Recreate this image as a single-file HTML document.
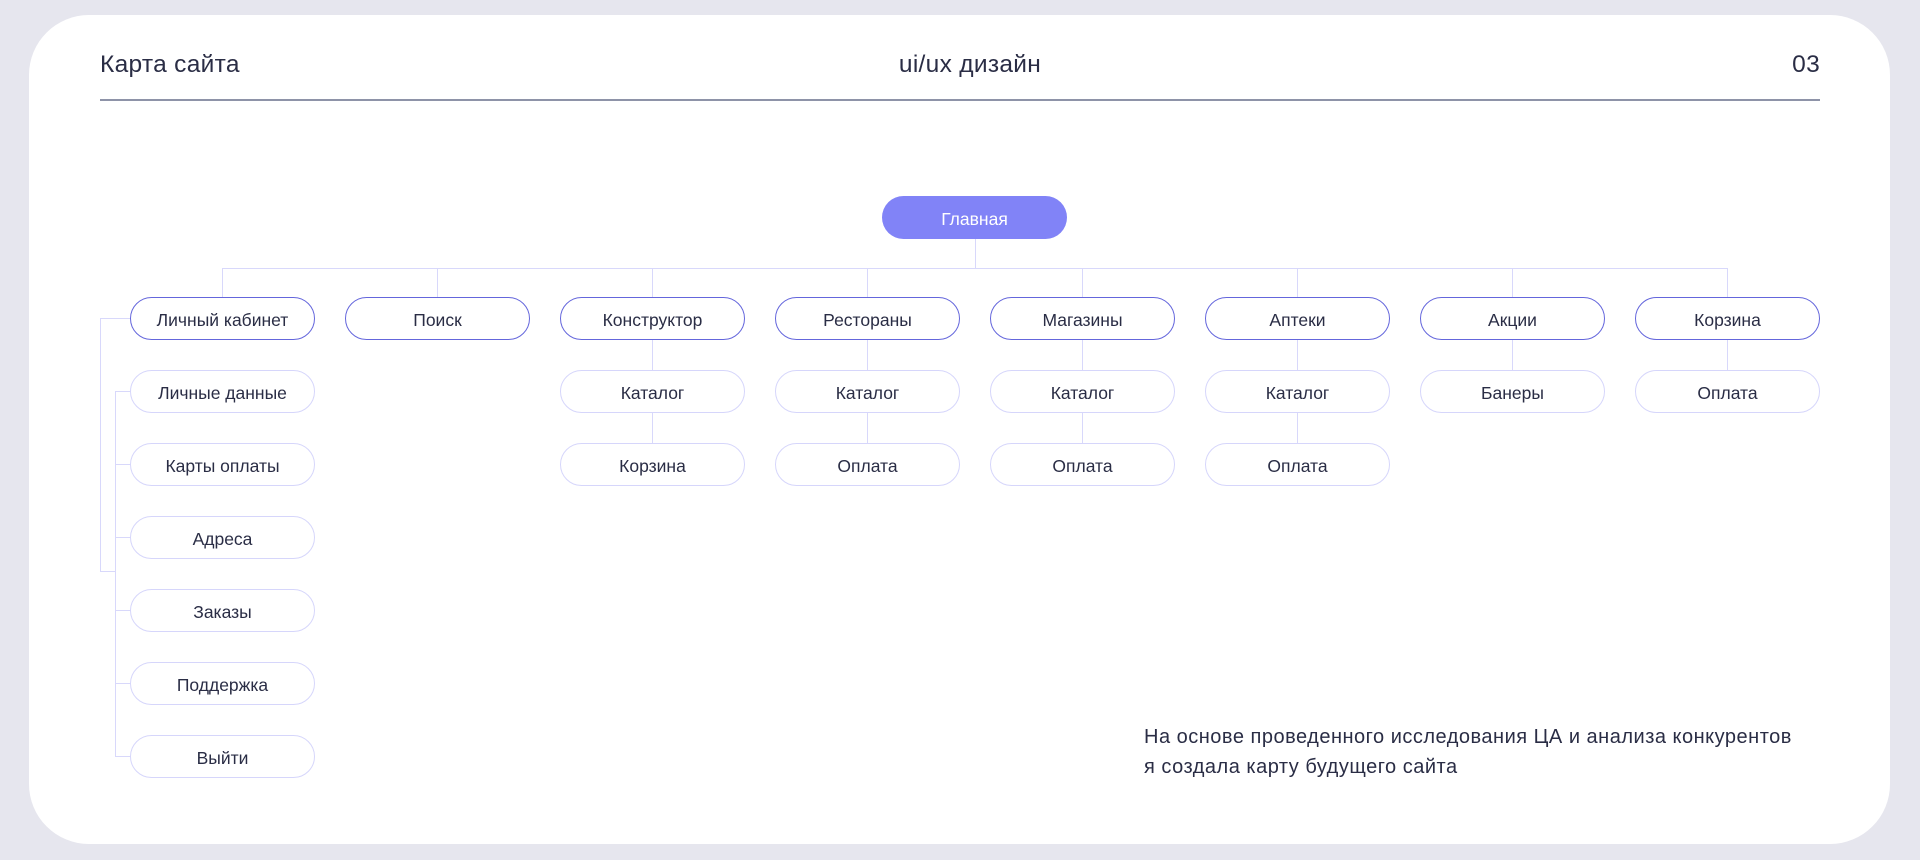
<!DOCTYPE html>
<html><head><meta charset="utf-8"><style>
*{margin:0;padding:0;box-sizing:border-box}
body{width:1920px;height:860px;background:#e6e6ee;font-family:"Liberation Sans","Noto Sans CJK SC",sans-serif;color:#2a2d45;position:relative;overflow:hidden}
.card{position:absolute;left:29px;top:15px;width:1861px;height:829px;background:#fff;border-radius:60px}
.h{position:absolute;top:51px;font-size:24.5px;color:#2a2d45;letter-spacing:0.3px}
.div{position:absolute;left:100px;top:99px;width:1720px;height:1.5px;background:#8e93a8}
.b{position:absolute;width:185px;height:43px;border-radius:22px;border:1.3px solid #d6d6fb;background:#fff;display:flex;align-items:center;justify-content:center;font-size:17.5px;color:#2a2d45;padding-top:3px}
.t{border-color:#6466dc}
.l{position:absolute;background:#d8d8fb}
.main{background:#8183f7;border:none;color:#fff}
.txt{position:absolute;left:1144px;top:722px;font-size:20px;letter-spacing:0.5px;line-height:30px;color:#2a2d45}
</style></head><body>
<div class="card"></div>
<div class="h" style="left:100px">Карта сайта</div>
<div class="h" style="left:0;width:1940px;text-align:center">ui/ux дизайн</div>
<div class="h" style="right:100px">03</div>
<div class="div"></div>

<div class="l" style="left:975px;top:239px;width:1.3px;height:29px"></div>
<div class="l" style="left:222px;top:268px;width:1505px;height:1.3px"></div>
<div class="l" style="left:222px;top:268px;width:1.3px;height:29px"></div>
<div class="l" style="left:437px;top:268px;width:1.3px;height:29px"></div>
<div class="l" style="left:652px;top:268px;width:1.3px;height:29px"></div>
<div class="l" style="left:867px;top:268px;width:1.3px;height:29px"></div>
<div class="l" style="left:1082px;top:268px;width:1.3px;height:29px"></div>
<div class="l" style="left:1297px;top:268px;width:1.3px;height:29px"></div>
<div class="l" style="left:1512px;top:268px;width:1.3px;height:29px"></div>
<div class="l" style="left:1727px;top:268px;width:1.3px;height:29px"></div>
<div class="l" style="left:652px;top:340px;width:1.3px;height:103px"></div>
<div class="l" style="left:867px;top:340px;width:1.3px;height:103px"></div>
<div class="l" style="left:1082px;top:340px;width:1.3px;height:103px"></div>
<div class="l" style="left:1297px;top:340px;width:1.3px;height:103px"></div>
<div class="l" style="left:1512px;top:340px;width:1.3px;height:30px"></div>
<div class="l" style="left:1727px;top:340px;width:1.3px;height:30px"></div>
<div class="l" style="left:100px;top:318px;width:1.3px;height:253px"></div>
<div class="l" style="left:100px;top:318px;width:30px;height:1.3px"></div>
<div class="l" style="left:100px;top:571px;width:15px;height:1.3px"></div>
<div class="l" style="left:115px;top:391px;width:1.3px;height:365px"></div>
<div class="l" style="left:115px;top:391px;width:15px;height:1.3px"></div>
<div class="l" style="left:115px;top:464px;width:15px;height:1.3px"></div>
<div class="l" style="left:115px;top:537px;width:15px;height:1.3px"></div>
<div class="l" style="left:115px;top:610px;width:15px;height:1.3px"></div>
<div class="l" style="left:115px;top:683px;width:15px;height:1.3px"></div>
<div class="l" style="left:115px;top:756px;width:15px;height:1.3px"></div>

<div class="b main" style="left:882px;top:196px">Главная</div>

<div class="b t" style="left:130px;top:297px">Личный кабинет</div>
<div class="b t" style="left:345px;top:297px">Поиск</div>
<div class="b t" style="left:560px;top:297px">Конструктор</div>
<div class="b t" style="left:775px;top:297px">Рестораны</div>
<div class="b t" style="left:990px;top:297px">Магазины</div>
<div class="b t" style="left:1205px;top:297px">Аптеки</div>
<div class="b t" style="left:1420px;top:297px">Акции</div>
<div class="b t" style="left:1635px;top:297px">Корзина</div>

<div class="b" style="left:130px;top:370px">Личные данные</div>
<div class="b" style="left:130px;top:443px">Карты оплаты</div>
<div class="b" style="left:130px;top:516px">Адреса</div>
<div class="b" style="left:130px;top:589px">Заказы</div>
<div class="b" style="left:130px;top:662px">Поддержка</div>
<div class="b" style="left:130px;top:735px">Выйти</div>

<div class="b" style="left:560px;top:370px">Каталог</div>
<div class="b" style="left:560px;top:443px">Корзина</div>
<div class="b" style="left:775px;top:370px">Каталог</div>
<div class="b" style="left:775px;top:443px">Оплата</div>
<div class="b" style="left:990px;top:370px">Каталог</div>
<div class="b" style="left:990px;top:443px">Оплата</div>
<div class="b" style="left:1205px;top:370px">Каталог</div>
<div class="b" style="left:1205px;top:443px">Оплата</div>
<div class="b" style="left:1420px;top:370px">Банеры</div>
<div class="b" style="left:1635px;top:370px">Оплата</div>

<div class="txt">На основе проведенного исследования ЦА и анализа конкурентов<br>я создала карту будущего сайта</div>
</body></html>
